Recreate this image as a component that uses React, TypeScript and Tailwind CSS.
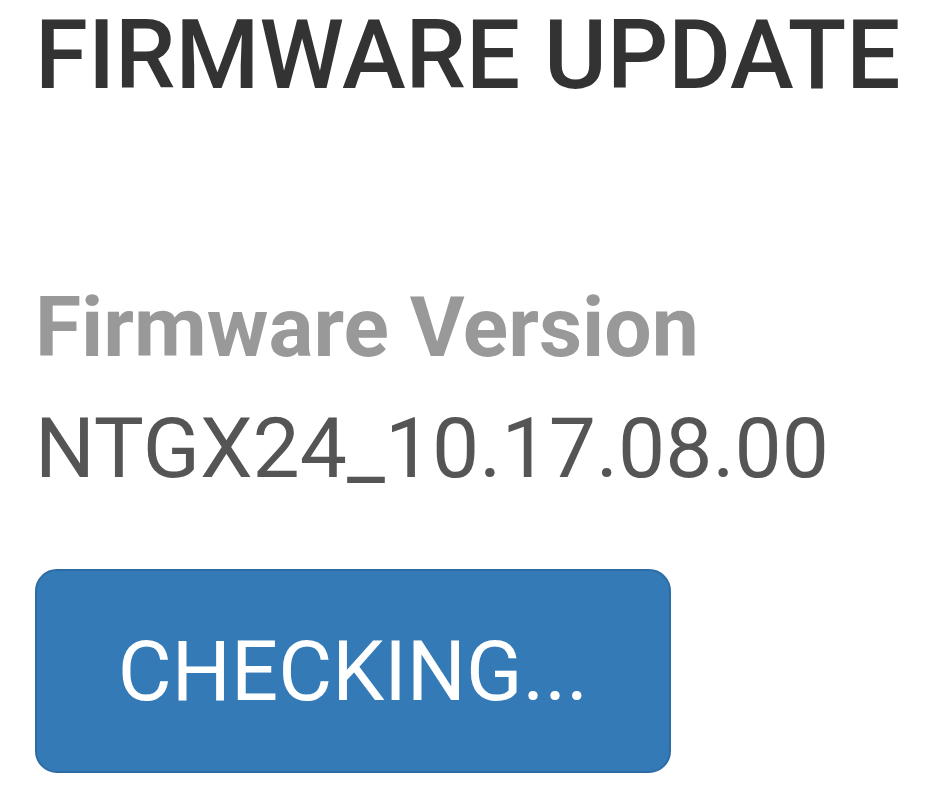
export default function App() {
  return (
    <div
      className="w-[950px] h-[794px] bg-white overflow-hidden pl-[35px] pt-[7px]"
      style={{ fontFamily: 'Roboto, "Liberation Sans", sans-serif' }}
    >
      <h1 className="text-[96px] leading-none text-[#333333] font-medium">FIRMWARE UPDATE</h1>
      <div className="mt-[183px] text-[84px] leading-none font-bold text-[#999999]">Firmware Version</div>
      <div className="mt-[37px] text-[84px] leading-none text-[#555555]">NTGX24_10.17.08.00</div>
      <button className="mt-[78px] w-[636px] h-[204px] rounded-[22px] bg-[#337ab7] border-2 border-[#2e6da4] text-white text-[83px] leading-none flex items-center justify-center">
        CHECKING...
      </button>
    </div>
  )
}
